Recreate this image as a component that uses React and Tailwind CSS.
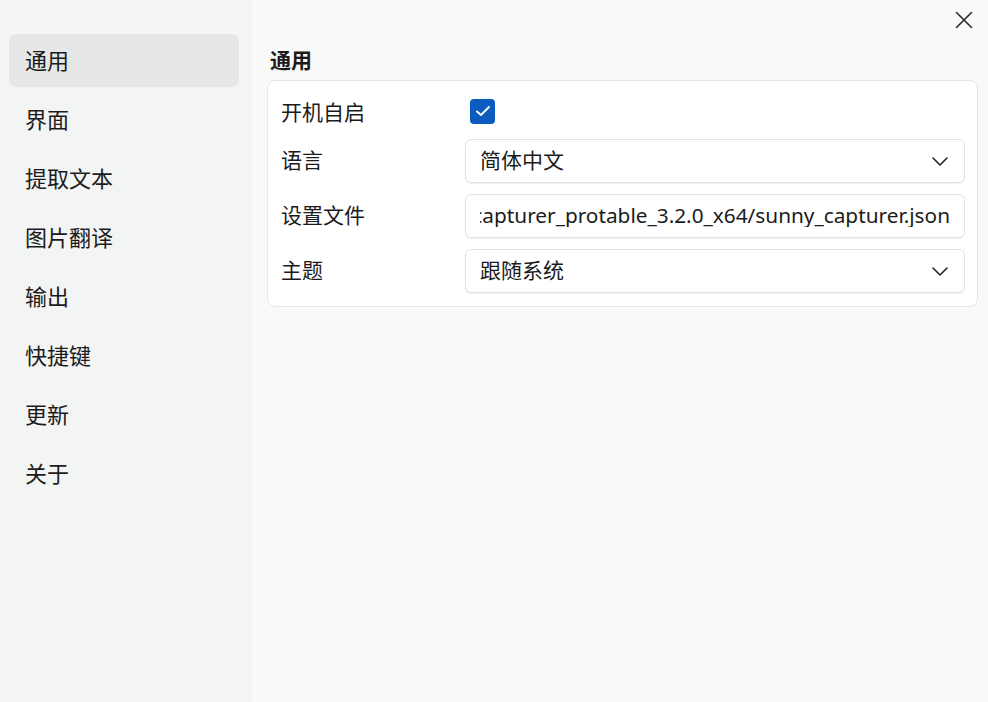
import React from "react";

const cjk = { fontFamily: '"Noto Sans CJK SC", "Noto Sans", sans-serif' };
const latin = { fontFamily: '"Noto Sans", "Noto Sans CJK SC", sans-serif' };

const navItems = ["通用", "界面", "提取文本", "图片翻译", "输出", "快捷键", "更新", "关于"];

function Chevron() {
  return (
    <svg width="18" height="12" viewBox="0 0 18 12" fill="none" className="text-[#222]">
      <polyline points="2,3 9,10 16,3" stroke="currentColor" strokeWidth="1.6" strokeLinecap="round" strokeLinejoin="round" />
    </svg>
  );
}

function SelectBox({ value }) {
  return (
    <div className="flex h-[44px] min-w-0 flex-1 items-center justify-between rounded-[6px] border border-[#e3e3e3] bg-white pl-[14px] pr-[15px] shadow-[0_1px_1px_rgba(0,0,0,0.06)]">
      <span className="pb-[3px] text-[21px] leading-none text-[#1b1b1b]">{value}</span>
      <Chevron />
    </div>
  );
}

export default function App() {
  return (
    <div className="flex h-[702px] w-[988px] overflow-hidden bg-[#f9f9f9] text-[#1b1b1b]" style={cjk}>
      <aside className="flex w-[252px] shrink-0 flex-col gap-[6px] bg-[#f3f4f4] pl-[9px] pr-[13px] pt-[34px]">
        {navItems.map((item, i) => (
          <div
            key={item}
            className={`flex h-[53px] items-center rounded-[7px] pb-[3px] pl-[16px] text-[22px] leading-none ${i === 0 ? "bg-[#e6e7e7]" : ""}`}
          >
            {item}
          </div>
        ))}
      </aside>

      <main className="relative flex min-w-0 flex-1 flex-col pl-[15px] pr-[10px]">
        <button className="absolute right-[15px] top-[11px] flex h-[18px] w-[18px] items-center justify-center text-[#2a2a2a]">
          <svg width="18" height="18" viewBox="0 0 18 18" fill="none">
            <path d="M1.5 1.5L16.5 16.5M16.5 1.5L1.5 16.5" stroke="currentColor" strokeWidth="1.6" strokeLinecap="round" />
          </svg>
        </button>

        <h1 className="mt-[46px] pl-[3px] text-[21px] font-bold leading-[27px]">通用</h1>

        <div className="mt-[7px] flex min-w-0 flex-col gap-[11px] rounded-[8px] border border-[#e6e6e6] bg-white px-[12px] pb-[13px] pt-[13px]">
          <div className="flex h-[34px] items-center">
            <div className="w-[185px] shrink-0 pl-[1px] text-[21px] leading-none">开机自启</div>
            <div className="ml-[5px] flex h-[25px] w-[25px] items-center justify-center rounded-[4px] bg-[#0b5cbe]">
              <svg width="16" height="12" viewBox="0 0 16 12" fill="none">
                <polyline points="2,6.5 6,10 14,2" stroke="white" strokeWidth="1.9" strokeLinecap="round" strokeLinejoin="round" />
              </svg>
            </div>
          </div>

          <div className="flex items-center">
            <div className="w-[185px] shrink-0 pb-[3px] pl-[1px] text-[21px] leading-none">语言</div>
            <SelectBox value="简体中文" />
          </div>

          <div className="flex items-center">
            <div className="w-[185px] shrink-0 pb-[3px] pl-[1px] text-[21px] leading-none">设置文件</div>
            <div className="flex h-[44px] min-w-0 flex-1 items-center rounded-[6px] border border-[#e3e3e3] bg-white px-[14px] shadow-[0_1px_1px_rgba(0,0,0,0.06)]">
              <div className="flex min-w-0 flex-1 justify-end overflow-hidden">
                <span className="shrink-0 whitespace-nowrap pb-[2px] text-[20.8px] leading-none text-[#1b1b1b]" style={latin}>
                  D:/Software/sunny_capturer_protable_3.2.0_x64/sunny_capturer.json
                </span>
              </div>
            </div>
          </div>

          <div className="flex items-center">
            <div className="w-[185px] shrink-0 pb-[3px] pl-[1px] text-[21px] leading-none">主题</div>
            <SelectBox value="跟随系统" />
          </div>
        </div>
      </main>
    </div>
  );
}
